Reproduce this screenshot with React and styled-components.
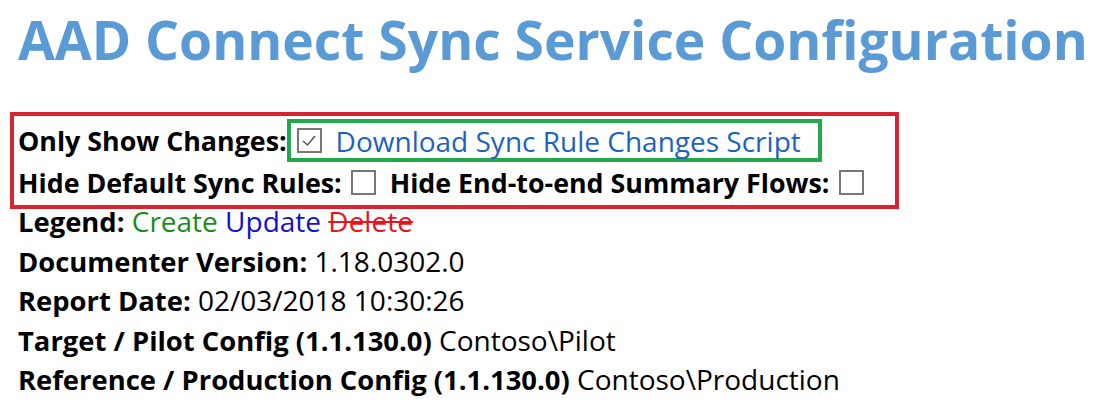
import * as React from 'react';
import styled, { createGlobalStyle } from 'styled-components';

const GlobalStyle = createGlobalStyle`
  html, body {
    margin: 0;
    padding: 0;
    background: #ffffff;
  }
  body {
    font-family: 'Open Sans', Lato, sans-serif;
    color: #000000;
  }
`

const Page = styled.div`
  width: 1113px;
  height: 409px;
  box-sizing: border-box;
  padding-left: 18px;
  padding-top: 5px;
  overflow: hidden;
`
const Title = styled.h1`
  margin: 0;
  font-family: 'Open Sans', sans-serif;
  font-weight: 700;
  font-size: 53.4px;
  line-height: 70px;
  color: #5b9bd5;
  white-space: nowrap;
`
const OptionsBox = styled.div`
  margin-top: 37px;
  margin-left: -8px;
  width: 889px;
  box-sizing: border-box;
  border: 4px solid #d7242f;
  padding: 3px 0 3px 4px;
  display: flex;
  flex-direction: column;
`
const OptionRow = styled.div`
  display: flex;
  align-items: center;
  height: ${props => props.$height}px;
  white-space: nowrap;
`
const Label = styled.span`
  font-size: 26.8px;
  font-weight: 700;
  margin-right: ${props => props.$gap || 0}px;
`
const ScriptBox = styled.div`
  display: flex;
  align-items: center;
  box-sizing: border-box;
  height: 43px;
  border: 4px solid #22a94b;
  padding: 0 17px 0 6px;
`
const CheckBox = styled.span`
  display: inline-flex;
  align-items: center;
  justify-content: center;
  box-sizing: border-box;
  width: 25px;
  height: 25px;
  border: 2px solid #777777;
  margin-right: ${props => props.$gap || 0}px;
  flex-shrink: 0;
`
const ScriptLink = styled.a`
  font-size: 28px;
  color: #1d63bd;
  text-decoration: none;
`
const Details = styled.div`
  margin-top: -7px;
  display: flex;
  flex-direction: column;
`
const DetailRow = styled.div`
  font-size: 28px;
  line-height: 39.5px;
  white-space: nowrap;
`
const Strong = styled.b`
  font-weight: 700;
  font-size: 27.4px;
`
const LegendItem = styled.span`
  color: ${props => props.$color};
  text-decoration: ${props => (props.$strike ? 'line-through' : 'none')};
`

function Check({ checked, gap }) {
  return (
    <CheckBox $gap={gap}>
      {checked && (
        <svg width="16" height="13" viewBox="0 0 16 13">
          <path d="M2 7 L6.5 11 L14 2" fill="none" stroke="#555555" strokeWidth="1.5" />
        </svg>
      )}
    </CheckBox>
  );
}

function App() {
  return (
    <>
      <GlobalStyle />
      <Page>
        <Title>AAD Connect Sync Service Configuration</Title>
        <OptionsBox>
          <OptionRow $height={43}>
            <Label>Only Show Changes:</Label>
            <ScriptBox>
              <Check checked gap={14} />
              <ScriptLink href="#">Download Sync Rule Changes Script</ScriptLink>
            </ScriptBox>
          </OptionRow>
          <OptionRow $height={40}>
            <Label $gap={9}>Hide Default Sync Rules:</Label>
            <Check gap={14} />
            <Label $gap={10}>Hide End-to-end Summary Flows:</Label>
            <Check />
          </OptionRow>
        </OptionsBox>
        <Details>
          <DetailRow>
            <Strong>Legend:</Strong>{' '}
            <LegendItem $color="#1e8a1e">Create</LegendItem>{' '}
            <LegendItem $color="#1010d0">Update</LegendItem>{' '}
            <LegendItem $color="#e8141c" $strike>Delete</LegendItem>
          </DetailRow>
          <DetailRow>
            <Strong>Documenter Version:</Strong> 1.18.0302.0
          </DetailRow>
          <DetailRow>
            <Strong>Report Date:</Strong> 02/03/2018 10:30:26
          </DetailRow>
          <DetailRow>
            <Strong>Target / Pilot Config (1.1.130.0)</Strong> Contoso\Pilot
          </DetailRow>
          <DetailRow>
            <Strong>Reference / Production Config (1.1.130.0)</Strong> Contoso\Production
          </DetailRow>
        </Details>
      </Page>
    </>
  );
}

export default App;
